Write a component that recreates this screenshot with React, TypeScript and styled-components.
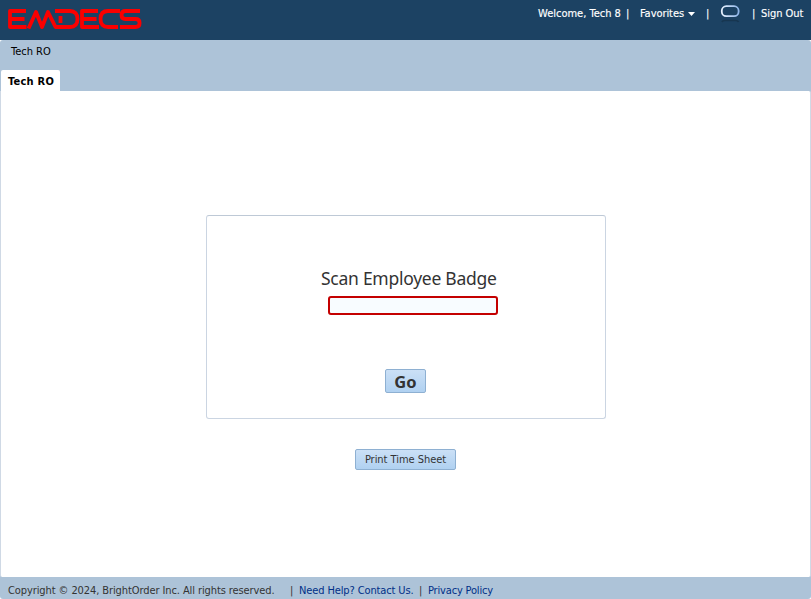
import React from "react";
import styled, { createGlobalStyle } from "styled-components";

const GlobalStyle = createGlobalStyle`
  * { box-sizing: border-box; }
  body {
    margin: 0;
    background: #fff;
    font: 11px/14px "DejaVu Sans Condensed", Tahoma, sans-serif;
    color: #333;
  }
`;

const Page = styled.div`
  display: flex;
  flex-direction: column;
  width: 811px;
  height: 599px;
  overflow: hidden;
`;

const Header = styled.header`
  display: flex;
  justify-content: space-between;
  height: 40px;
  flex: none;
  background: #1c4263;
  padding: 7px 7px 0 7px;
`;

const Logo = styled.svg`
  width: 136px;
  height: 24px;
  fill: none;
  stroke: #fb0000;
  stroke-width: 3.8;
  stroke-linejoin: round;
`;

const UserBar = styled.nav`
  display: flex;
  align-items: flex-start;
  color: #fff;
  -webkit-text-stroke: 0.15px #fff;
`;

const Label = styled.span<{ $spacing?: number; $width?: number }>`
  flex: none;
  white-space: nowrap;
  letter-spacing: ${(p) => p.$spacing ?? 0}px;
  width: ${(p) => (p.$width ? `${p.$width}px` : "auto")};
`;

const FavoritesMenu = styled.div`
  display: flex;
  align-items: center;
  gap: 4px;
  width: 66px;
`;

const Caret = styled.svg`
  width: 7px;
  height: 4px;
  fill: #fff;
`;

const ChatIcon = styled.svg`
  width: 20px;
  height: 20px;
  margin: -3px 12px 0 0;
`;

const Body = styled.div`
  display: flex;
  flex-direction: column;
  flex: 1;
  background: #adc3d8;
  border-radius: 3px;
`;

const Tabs = styled.div`
  display: flex;
  flex-direction: column;
  justify-content: space-between;
  height: 51px;
  flex: none;
  padding: 5px 0 0 1px;
`;

const Crumb = styled.div`
  padding-left: 10px;
  color: #000;
`;

const Tab = styled.div`
  width: 59px;
  height: 21px;
  padding: 5px 0 0 7px;
  border-radius: 2px 2px 0 0;
  background: #fff;
  color: #000;
  font-weight: 700;
`;

const Content = styled.main`
  display: flex;
  flex-direction: column;
  align-items: center;
  height: 486px;
  flex: none;
  padding-top: 124px;
  border: 1px solid #cfd9e5;
  border-width: 0 1px;
  border-radius: 0 2px 2px 2px;
  background: #fff;
`;

const Panel = styled.section`
  display: flex;
  flex-direction: column;
  align-items: center;
  width: 400px;
  height: 204px;
  padding-top: 51px;
  border: 1px solid #cbd5e2;
  border-top-color: #bec9d6;
  border-radius: 3px;
`;

const Title = styled.label`
  width: 176px;
  margin-left: 7px;
  font-family: "Noto Sans", Tahoma, sans-serif;
  font-size: 17.5px;
  line-height: 22px;
  letter-spacing: -0.26px;
  white-space: nowrap;
`;

const BadgeInput = styled.input`
  width: 170px;
  height: 19px;
  margin: 7px 0 0 14px;
  padding: 0 4px;
  border: 2px solid #c40000;
  border-radius: 3px;
  background: #f8fcff;
  outline: none;
`;

const Button = styled.button`
  display: flex;
  align-items: center;
  justify-content: center;
  padding: 0;
  border: 1px solid #8eb0d2;
  border-radius: 2px;
  background: linear-gradient(#cbe0f6, #b0d1f1);
  color: #333;
  font: inherit;
  white-space: nowrap;
`;

const GoButton = styled(Button)`
  width: 41px;
  height: 24px;
  margin-top: 54px;
  padding-top: 1px;
  font-family: "Noto Sans", Tahoma, sans-serif;
  font-size: 16.5px;
  font-weight: 700;
`;

const PrintButton = styled(Button)`
  width: 101px;
  height: 21px;
  margin-top: 30px;
`;

const Footer = styled.footer`
  display: flex;
  flex: 1;
  padding: 7px 8px 0;
`;

const FooterLink = styled(Label)`
  color: #002f87;
`;

export default function App() {
  return (
    <>
      <GlobalStyle />
      <Page>
        <Header>
          <Logo viewBox="0 0 136 24" role="img" aria-label="EMDECS">
            <path d="M19 4H3V20H19.5M3 12H17.5" />
            <path d="M21.5 21.5L29 5L35 20L41 5L48.5 20H63Q70.5 20 70.5 12Q70.5 4 63 4H48M53.5 9V16" />
            <path d="M91 4H75V20H92M75 12H89.5" />
            <path d="M113 4H101Q93.5 4 93.5 12Q93.5 20 101 20H111" />
            <path d="M133 4H118.5Q114.5 4 114.5 8Q114.5 12 118.5 12H128.5Q132.6 12 132.6 16Q132.6 20 128.5 20H113" />
          </Logo>
          <UserBar>
            <Label $width={88}>Welcome, Tech 8</Label>
            <Label $width={14}>|</Label>
            <FavoritesMenu>
              <Label $spacing={-0.06}>Favorites</Label>
              <Caret viewBox="0 0 7 4"><path d="M0 0H7L3.5 4Z" /></Caret>
            </FavoritesMenu>
            <Label $width={14}>|</Label>
            <ChatIcon viewBox="0 0 20 20">
              <defs>
                <linearGradient id="ring" x1="0" y1="0" x2="1" y2="0">
                  <stop offset="0" stopColor="#e8f2ff" />
                  <stop offset="1" stopColor="#8eb5e9" />
                </linearGradient>
              </defs>
              <rect x="1.8" y="2.2" width="16.8" height="10" rx="4.5" fill="none" stroke="url(#ring)" strokeWidth="1.8" />
              <path d="M2 18Q2.5 16.5 5 16.5H15Q18 16.5 18.5 18" fill="none" stroke="#173650" strokeWidth="1.7" />
            </ChatIcon>
            <Label $width={9}>|</Label>
            <Label $spacing={-0.06} $width={43}>Sign Out</Label>
          </UserBar>
        </Header>
        <Body>
          <Tabs>
            <Crumb><Label>Tech RO</Label></Crumb>
            <Tab><Label $spacing={0.25}>Tech RO</Label></Tab>
          </Tabs>
          <Content>
            <Panel>
              <Title htmlFor="badge">Scan Employee Badge</Title>
              <BadgeInput id="badge" />
              <GoButton>Go</GoButton>
            </Panel>
            <PrintButton><Label $spacing={-0.04}>Print Time Sheet</Label></PrintButton>
          </Content>
          <Footer>
            <Label $spacing={-0.095} $width={282}>Copyright © 2024, BrightOrder Inc. All rights reserved.</Label>
            <Label $width={9}>|</Label>
            <FooterLink $spacing={-0.12} $width={120}>Need Help? Contact Us.</FooterLink>
            <Label $width={9}>|</Label>
            <FooterLink $spacing={-0.17}>Privacy Policy</FooterLink>
          </Footer>
        </Body>
      </Page>
    </>
  );
}
